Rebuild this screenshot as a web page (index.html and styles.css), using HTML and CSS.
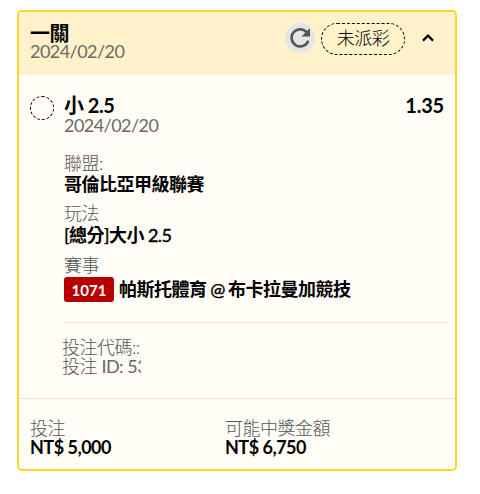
FILE: index.html
```
<!DOCTYPE html>
<html lang="zh-Hant">

<head>
    <meta charset="UTF-8">
    <meta name="viewport" content="width=device-width, initial-scale=1.0">
    <title>注單</title>
    <link rel="stylesheet" href="styles.css">
</head>

<body>
    <div class="card">
        <!-- 標題 -->
        <div class="header">
            <div class="header-info">
                <div class="title">一關</div>
                <div class="date">2024/02/20</div>
            </div>
            <div class="refresh">
                <svg width="30" height="30" viewBox="0 0 30 30">
                    <path d="M21.8 9.3A8.6 8.6 0 1 0 23.3 17.7" fill="none" stroke="#555" stroke-width="2.6" />
                    <path d="M25 5v8.4h-8.4z" fill="#555" />
                </svg>
            </div>
            <div class="status">未派彩</div>
            <svg class="arrow" width="14" height="10" viewBox="0 0 14 10">
                <path d="M2 7.6L7 2.6L12 7.6" fill="none" stroke="#000" stroke-width="2.2" />
            </svg>
        </div>
        <!-- 注單內容 -->
        <div class="content">
            <div class="circle"></div>
            <div class="detail">
                <div class="pick">
                    <span>小 2.5</span>
                    <span class="odds">1.35</span>
                </div>
                <div class="date">2024/02/20</div>
                <div class="league">
                    <div class="label">聯盟:</div>
                    <div class="value">哥倫比亞甲級聯賽</div>
                </div>
                <div class="play">
                    <div class="label">玩法</div>
                    <div class="value"><span class="medium">[</span>總分<span class="medium">]</span>大小 <span class="medium">2.5</span></div>
                </div>
                <div class="match">
                    <div class="label">賽事</div>
                    <div class="teams">
                        <span class="num">1071</span>
                        <span class="value">帕斯托體育<span class="medium at"> @ </span>布卡拉曼加競技</span>
                    </div>
                </div>
                <div class="codes">
                    <div class="code">投注代碼::</div>
                    <div class="code">投注 <span class="thin">ID: 53</span></div>
                </div>
            </div>
        </div>
        <!-- 金額 -->
        <div class="footer">
            <div class="money">
                <div class="label">投注</div>
                <div class="value">NT$ 5,000</div>
            </div>
            <div class="money">
                <div class="label">可能中獎金額</div>
                <div class="value">NT$ 6,750</div>
            </div>
        </div>
    </div>
</body>

</html>
```
FILE: styles.css
```
* {
    box-sizing: border-box;
}

body {
    margin: 0;
    padding: 10px 0 0 17px;
    background: #fff;
    font-family: Lato, "Noto Sans CJK TC", sans-serif;
    font-size: 18px;
    line-height: 18px;
    letter-spacing: -0.5px;
    color: #000;
    white-space: nowrap;
}

.card {
    width: 440px;
    height: 461px;
    border: 2px solid #ffd52b;
    border-radius: 5px;
    background: #fffdf5;
    overflow: hidden;
}

.header {
    display: flex;
    align-items: flex-start;
    height: 63px;
    padding: 11px 20px 0 11px;
    background: #fff2cb;
}

.header-info {
    flex: 1;
}

.title {
    padding-top: 1px;
    font-size: 20px;
    font-weight: 700;
}

.date {
    color: #6b6963;
    font-weight: 400;
    letter-spacing: -0.55px;
}

.refresh {
    width: 30px;
    height: 30px;
    margin-right: 6px;
    border-radius: 50%;
    background: #e5e5e8;
}

.status {
    width: 84px;
    height: 32px;
    margin-right: 16px;
    border: 1px dashed #000;
    border-radius: 16px;
    line-height: 28px;
    font-weight: 300;
    text-align: center;
}

.arrow {
    margin-top: 10px;
}

.content {
    display: flex;
    height: 324px;
    padding: 21px 8px 0 11px;
    border-bottom: 1px solid #e5e2dc;
}

.circle {
    width: 24px;
    height: 24px;
    margin-right: 10px;
    border: 1px dashed #000;
    border-radius: 50%;
}

.detail {
    flex: 1;
}

.pick {
    display: flex;
    justify-content: space-between;
    padding-right: 3px;
    font-size: 20px;
    line-height: 19px;
    font-weight: 700;
}

.pick + .date {
    padding-top: 1px;
}

.odds {
    letter-spacing: -0.2px;
}

.label {
    color: #555;
    font-weight: 300;
}

.value {
    font-weight: 700;
}

.thin {
    color: #666;
    font-weight: 400;
}

.medium {
    font-weight: 400;
    -webkit-text-stroke: 0.4px #000;
}

.at {
    letter-spacing: -0.9px;
}

.league {
    margin-top: 19px;
    line-height: 21px;
}

.play {
    margin-top: 7px;
    line-height: 22px;
}

.match {
    margin-top: 8px;
    line-height: 22px;
}

.teams {
    display: flex;
    align-items: center;
    height: 25px;
    margin-top: 1px;
    line-height: 20px;
}

.teams .value {
    padding-bottom: 2px;
}

.num {
    width: 50px;
    height: 25px;
    margin-right: 5px;
    border-radius: 3px;
    background: #b70000;
    color: #fff;
    font-size: 15px;
    font-weight: 700;
    line-height: 26px;
    letter-spacing: 0;
    text-align: center;
}

.codes {
    margin-top: 20px;
    padding-top: 15px;
    border-top: 1px solid #e5e2dc;
}

.code {
    width: 79px;
    margin-left: -2px;
    overflow: hidden;
    color: #555;
    font-weight: 300;
    line-height: 19px;
}

.footer {
    display: flex;
    padding: 20px 11px 0;
    line-height: 19px;
}

.money {
    width: 195px;
}
```
